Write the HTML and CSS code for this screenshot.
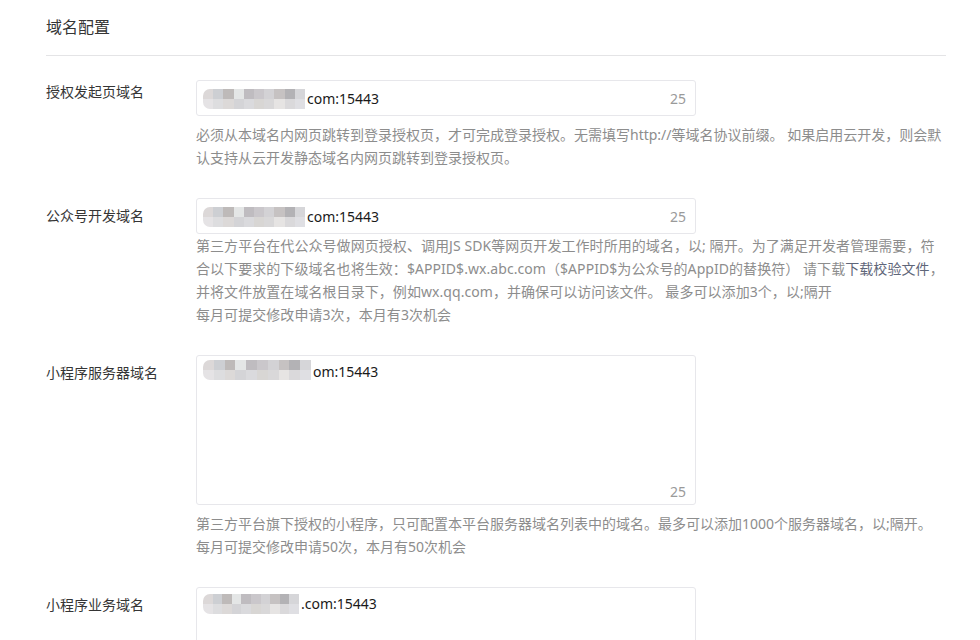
FILE: index.html
```html
<!DOCTYPE html>
<html lang="zh-CN">
<head>
    <meta charset="UTF-8">
    <meta name="viewport" content="width=device-width, initial-scale=1.0">
    <title>域名配置</title>
    <link rel="stylesheet" href="styles.css">
</head>
<body>
    <div class="page">
        <div class="page-title">域名配置</div>

        <div class="form-row">
            <label class="form-label form-label-top">授权发起页域名</label>
            <div class="form-control">
                <div class="field">
                    <span class="mosaic"></span><span class="value">com:15443</span>
                    <span class="count">25</span>
                </div>
                <p class="help">必须从本域名内网页跳转到登录授权页，才可完成登录授权。无需填写http://等域名协议前缀。 如果启用云开发，则会默认支持从云开发静态域名内网页跳转到登录授权页。</p>
            </div>
        </div>

        <div class="form-row">
            <label class="form-label">公众号开发域名</label>
            <div class="form-control">
                <div class="field">
                    <span class="mosaic"></span><span class="value">com:15443</span>
                    <span class="count">25</span>
                </div>
                <p class="help help-tight">第三方平台在代公众号做网页授权、调用JS SDK等网页开发工作时所用的域名，以; 隔开。为了满足开发者管理需要，符合以下要求的下级域名也将生效：$APPID$.wx.abc.com（$APPID$为公众号的AppID的替换符） 请下载<a class="link" href="#">下载校验文件</a>，并将文件放置在域名根目录下，例如wx.qq.com，并确保可以访问该文件。 最多可以添加3个，以;隔开<br>每月可提交修改申请3次，本月有3次机会</p>
            </div>
        </div>

        <div class="form-row">
            <label class="form-label">小程序服务器域名</label>
            <div class="form-control">
                <div class="field field-area">
                    <span class="mosaic mosaic-wide"></span><span class="value">om:15443</span>
                    <span class="count">25</span>
                </div>
                <p class="help">第三方平台旗下授权的小程序，只可配置本平台服务器域名列表中的域名。最多可以添加1000个服务器域名，以;隔开。<br>每月可提交修改申请50次，本月有50次机会</p>
            </div>
        </div>

        <div class="form-row">
            <label class="form-label">小程序业务域名</label>
            <div class="form-control">
                <div class="field field-area">
                    <span class="mosaic mosaic-short"></span><span class="value">.com:15443</span>
                    <span class="count">25</span>
                </div>
            </div>
        </div>
    </div>
</body>
</html>
```

FILE: styles.css
```css
body {
    margin: 0;
    background-color: #fff;
    font-family: "Noto Sans", "Noto Sans CJK SC", sans-serif;
    font-size: 14px;
    color: #353535;
}
.page {
    width: 900px;
    padding-left: 46px;
}
.page-title {
    font-size: 16px;
    line-height: 22px;
    padding: 16px 0 17px;
    border-bottom: 1px solid #e4e4e6;
    margin-bottom: 24px;
}
.form-row {
    display: grid;
    grid-template-columns: 150px 750px;
    margin-bottom: 29px;
}
.form-label {
    line-height: 23px;
    padding-top: 6px;
    color: #353535;
}
.form-label-top {
    padding-top: 0;
}
.field {
    position: relative;
    box-sizing: border-box;
    width: 500px;
    height: 36px;
    border: 1px solid #e7e7eb;
    border-radius: 3px;
    padding: 6px 6px 0;
    line-height: 23px;
    color: #1a1a1a;
    white-space: nowrap;
}
.field-area {
    height: 150px;
    padding-top: 4px;
}
.mosaic {
    display: inline-block;
    width: 102px;
    height: 20px;
    vertical-align: -5px;
    margin-right: 2px;
    border-radius: 7px 0 0 7px;
    background:
        linear-gradient(90deg, #dcd8d8 0 10%, #cdcfd3 10% 20%, #bebab9 20% 30%, #e4e6e6 30% 40%, #bfbcc0 40% 50%, #cac7cb 50% 60%, #d3d2d5 60% 70%, #c6c2c2 70% 80%, #b3b2b5 80% 90%, #d6d6d9 90% 100%) top / 100% 50% no-repeat,
        linear-gradient(90deg, #e5e3e5 0 10%, #dddddf 10% 20%, #dcd9d8 20% 30%, #d4d4d7 30% 40%, #dadadd 40% 50%, #d8d6d4 50% 60%, #d9d8d9 60% 70%, #e6e4e3 70% 80%, #dad9db 80% 90%, #dfdfe3 90% 100%) bottom / 100% 50% no-repeat;
    filter: blur(0.6px);
}
.mosaic-wide {
    width: 108px;
    vertical-align: -3px;
}
.mosaic-short {
    width: 96px;
}
.count {
    position: absolute;
    right: 9px;
    top: 6px;
    color: #9a9a9a;
}
.field-area .count {
    top: auto;
    bottom: 1px;
}
.help {
    margin: 7px 0 0;
    line-height: 23px;
    color: #8d8d8d;
}
.help-tight {
    margin-top: 0;
    letter-spacing: 0.06px;
}
.link {
    color: #5f6679;
    text-decoration: none;
}
```
